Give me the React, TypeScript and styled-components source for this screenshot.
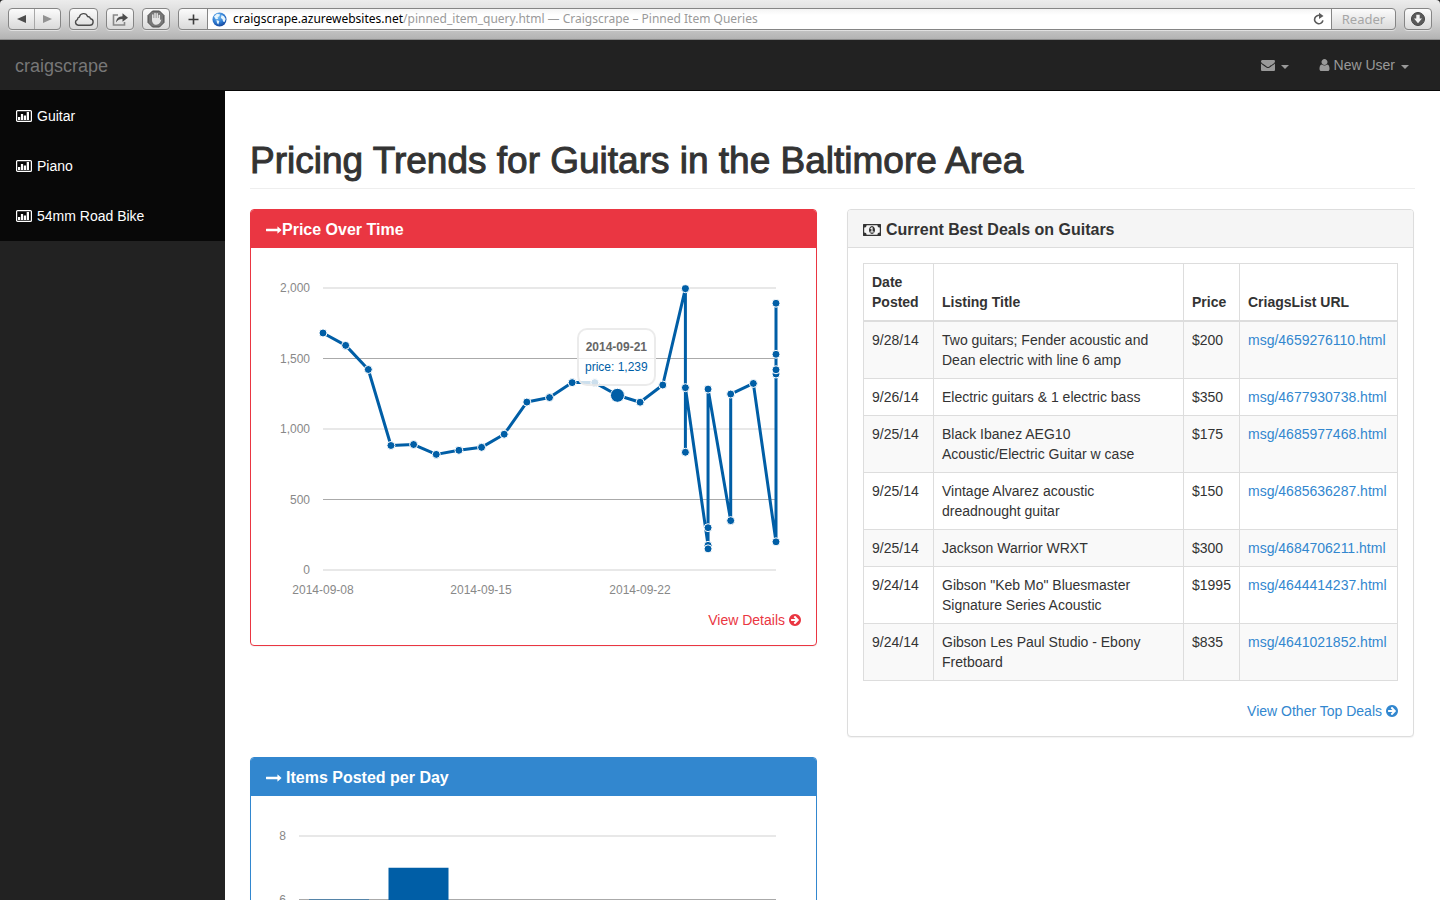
import React from "react";
import styled, { createGlobalStyle } from "styled-components";

const GlobalStyle = createGlobalStyle`
  *, *::before, *::after { box-sizing: border-box; }
  body {
    margin: 0;
    background: #222;
    color: #333;
    font-family: "Liberation Sans", Arial, sans-serif;
    font-size: 14px;
    line-height: 20px;
  }
  a { text-decoration: none; }
  button { font-family: inherit; margin: 0; padding: 0; cursor: pointer; }
`;

const BLUE = "#005ea6";

/* ---------- browser toolbar ---------- */

const Screen = styled.div`
  display: flex;
  flex-direction: column;
  height: 100vh;
  overflow: hidden;
`;

const Toolbar = styled.header`
  display: flex;
  flex: none;
  align-items: flex-start;
  gap: 8px;
  height: 40px;
  padding: 8px;
  background: linear-gradient(#ececec, #d4d4d4 50%, #b3b3b3);
  border-bottom: 1px solid #8c8c8c;
  border-radius: 4px 4px 0 0;
  font-family: "Noto Sans", "Open Sans", sans-serif;
`;

const ToolGroup = styled.div`
  display: flex;
  height: 22px;
  border: 1px solid #858585;
  border-radius: 4px;
  background: linear-gradient(#fbfbfb, #dadada);
  box-shadow: 0 1px 0 rgba(255, 255, 255, 0.5);
  overflow: hidden;
`;

const ToolButton = styled.button<{ $width: number; $divided?: boolean }>`
  display: flex;
  align-items: center;
  justify-content: center;
  width: ${(p) => p.$width}px;
  height: 20px;
  border: 0;
  border-right: ${(p) => (p.$divided ? "1px solid #a8a8a8" : "0")};
  background: transparent;
  color: #4c4c4c;
`;

const AddressGroup = styled(ToolGroup)`
  flex: 1;
`;

const Address = styled.div`
  display: flex;
  flex: 1;
  align-items: center;
  min-width: 0;
  padding: 0 6px 0 4px;
  border-left: 1px solid #858585;
  border-right: 1px solid #858585;
  background: linear-gradient(#f4f4f4, #fff 30%);
  font-size: 12px;
  line-height: 20px;
  color: #9a9a9a;
  white-space: nowrap;
`;

const AddressText = styled.span`
  flex: 1;
  padding-left: 6px;
  overflow: hidden;
`;

const Host = styled.span`
  color: #000;
`;

const ReaderButton = styled(ToolButton)`
  font-size: 13px;
  color: #a6a6a6;
`;

/* ---------- site navigation ---------- */

const Navbar = styled.nav`
  display: flex;
  flex: none;
  align-items: center;
  justify-content: space-between;
  height: 51px;
  padding: 0 16px 0 15px;
  background: #222;
  border-bottom: 1px solid #080808;
`;

const Brand = styled.a`
  padding-top: 2px;
  font-size: 18px;
  color: #777;
`;

const UserMenu = styled.div`
  display: flex;
`;

const MenuButton = styled.button`
  display: flex;
  align-items: center;
  gap: 4px;
  height: 50px;
  padding: 0 15px;
  border: 0;
  background: transparent;
  color: #999;
  font-size: 14px;
`;

const Caret = styled.span`
  margin: 3px 0 0 2px;
  border-top: 4px solid currentColor;
  border-left: 4px solid transparent;
  border-right: 4px solid transparent;
`;

const Body = styled.div`
  display: flex;
  flex: 1;
  min-height: 0;
`;

const Sidebar = styled.aside`
  flex: none;
  width: 225px;
  background: #222;
`;

const SideList = styled.ul`
  margin: 0;
  padding: 0;
  list-style: none;
  background: #080808;
`;

const SideLink = styled.a`
  display: flex;
  align-items: center;
  gap: 5px;
  height: 50px;
  padding: 0 16px;
  color: #fff;
`;

/* ---------- page content ---------- */

const Main = styled.main`
  flex: 1;
  min-width: 0;
  padding: 48px 25px 0;
  background: #fff;
  overflow: hidden;
`;

const PageTitle = styled.h1`
  margin: 0 0 20px;
  padding: 1px 0 7px;
  border-bottom: 1px solid #eee;
  font-size: 37px;
  font-weight: 400;
  line-height: 41px;
  -webkit-text-stroke: 1px #333;
`;

const Row = styled.div`
  display: grid;
  grid-template-columns: 1fr 1fr;
  align-items: start;
  column-gap: 30px;
  margin-bottom: 20px;
  padding-right: 1px;
`;

const Panel = styled.section<{ $edge: string }>`
  min-width: 0;
  border: 1px solid ${(p) => p.$edge};
  border-radius: 4px;
  background: #fff;
  box-shadow: 0 1px 1px rgba(0, 0, 0, 0.05);
`;

const PanelHead = styled.div<{ $fill: string; $edge: string; $color: string }>`
  padding: 11px 15px 8px;
  border-bottom: 1px solid ${(p) => p.$edge};
  border-radius: 3px 3px 0 0;
  background: ${(p) => p.$fill};
  color: ${(p) => p.$color};
`;

const PanelTitle = styled.h3<{ $gap: number }>`
  display: flex;
  align-items: center;
  gap: ${(p) => p.$gap}px;
  margin: 0;
  font-size: 16px;
  font-weight: 700;
  line-height: 18px;
`;

const PanelBody = styled.div`
  padding: 15px;
`;

const MoreLink = styled.a<{ $color: string }>`
  display: flex;
  align-items: center;
  justify-content: flex-end;
  gap: 4px;
  color: ${(p) => p.$color};
`;

const ChartBox = styled.div`
  position: relative;
  margin-bottom: 5px;
`;

const ChartSvg = styled.svg`
  display: block;
  width: 100%;
  height: 342px;
  font-size: 12px;
`;

const Tooltip = styled.div`
  position: absolute;
  left: 311px;
  top: 65px;
  padding: 7px 6px;
  border: 2px solid rgba(230, 230, 230, 0.8);
  border-radius: 10px;
  background: rgba(255, 255, 255, 0.8);
  font-size: 12px;
  line-height: 20px;
  text-align: center;
  white-space: nowrap;
`;

const TooltipDate = styled.div`
  font-weight: 700;
  color: #666;
`;

const TooltipValue = styled.div`
  color: ${BLUE};
`;

const Table = styled.table`
  width: 100%;
  margin-bottom: 20px;
  border: 1px solid #ddd;
  border-collapse: collapse;
  table-layout: fixed;
`;

const Col = styled.col<{ $width?: number }>`
  width: ${(p) => (p.$width ? `${p.$width}px` : "auto")};
`;

const HeadCell = styled.th`
  padding: 8px;
  border: 1px solid #ddd;
  border-bottom-width: 2px;
  text-align: left;
  vertical-align: bottom;
`;

const BodyRow = styled.tr`
  &:nth-child(odd) { background: #f9f9f9; }
`;

const Cell = styled.td`
  padding: 8px;
  border: 1px solid #ddd;
  vertical-align: top;
`;

const ItemLink = styled.a`
  color: #3287cf;
`;

/* ---------- icons ---------- */

const GlyphSvg = styled.svg`
  display: block;
  flex: none;
  fill: currentColor;
`;

const Glyph = ({ d, size, box = "0 0 1792 1792", width }: { d: string; size: number; box?: string; width?: number }) => (
  <GlyphSvg width={width ?? size} height={size} viewBox={box} aria-hidden="true">
    <path fillRule="evenodd" d={d} />
  </GlyphSvg>
);

const ENVELOPE =
  "M1792 710v794q0 66-47 113t-113 47h-1472q-66 0-113-47t-47-113v-794q44 49 101 87 362 246 497 345 57 42 92.5 65.5t94.5 48 110 24.5h2q51 0 110-24.5t94.5-48 92.5-65.5q170-123 498-345 57-39 100-87zm0-294q0 79-49 151t-122 123q-376 261-468 325-10 7-42.5 31t-54 38.5-52 32.5-57.5 27-50 9h-2q-23 0-50-9t-57.5-27-52-32.5-54-38.5-42.5-31q-91-64-262-182.5t-205-142.5q-62-42-117-115.5t-55-136.5q0-78 41.5-130t118.5-52h1472q65 0 112.5 47t47.5 113z";
const USER =
  "M1536 1399q0 109-62.5 187t-150.5 78h-854q-88 0-150.5-78t-62.5-187q0-85 8.5-160.5t31.5-152 58.5-131 94-89 134.5-34.5q131 128 313 128t313-128q76 0 134.5 34.5t94 89 58.5 131 31.5 152 8.5 160.5zm-256-887q0 159-112.5 271.5t-271.5 112.5-271.5-112.5-112.5-271.5 112.5-271.5 271.5-112.5 271.5 112.5 112.5 271.5z";
const LONG_ARROW =
  "M1728 893q0 14-10 24l-384 354q-16 14-35 6-19-9-19-29v-224h-1248q-14 0-23-9t-9-23v-192q0-14 9-23t23-9h1248v-224q0-21 19-29t35 5l384 350q10 10 10 23z";
const CIRCLE_ARROW =
  "M1413 896q0-27-18-45l-91-91-362-362q-18-18-45-18t-45 18l-91 91q-18 18-18 45t18 45l189 189h-502q-26 0-45 19t-19 45v128q0 26 19 45t45 19h502l-189 189q-19 19-19 45t19 45l91 91q18 18 45 18t45-18l362-362 91-91q18-18 18-45zm251 0q0 209-103 385.5t-279.5 279.5-385.5 103-385.5-103-279.5-279.5-103-385.5 103-385.5 279.5-279.5 385.5-103 385.5 103 279.5 279.5 103 385.5z";
const MONEY =
  "M768 1152h384v-96h-128v-448h-114l-148 137 77 80q42-37 55-57h2v288h-128v96zm512-256q0 70-21 142t-59.5 134-101.5 101-138 39-138-39-101.5-101-59.5-134-21-142 21-142 59.5-134 101.5-101 138-39 138 39 101.5 101 59.5 134 21 142zm512 256v-512q-106 0-181-75t-75-181h-1152q0 106-75 181t-181 75v512q106 0 181 75t75 181h1152q0-106 75-181t181-75zm128-832v1152q0 26-19 45t-45 19h-1792q-26 0-45-19t-19-45v-1152q0-26 19-45t45-19h1792q26 0 45 19t19 45z";

const BarChartIcon = () => (
  <GlyphSvg width="16" height="12" viewBox="0 0 16 12" aria-hidden="true">
    <rect x="0.6" y="0.6" width="14.800" height="10.800" rx="1" fill="none" stroke="currentColor" strokeWidth="1.200" />
    <rect x="2" y="7" width="2.200" height="3" />
    <rect x="4.900" y="4" width="2.200" height="6" />
    <rect x="7.800" y="5.500" width="2.200" height="4.500" />
    <rect x="10.700" y="2" width="2.300" height="8" />
  </GlyphSvg>
);

const CloudIcon = () => (
  <svg width="20" height="15" viewBox="0 0 20 15" fill="none" stroke="#4c4c4c" strokeWidth="1.4" aria-hidden="true">
    <path d="M4.200 13.200H15.800A3.300 3.300 0 0 0 16.600 6.700 3 3 0 0 0 13.600 4.500 4.300 4.300 0 0 0 5.300 5.200 2.600 2.600 0 0 0 3.400 7.600 2.900 2.900 0 0 0 4.200 13.200Z" />
  </svg>
);

const ShareIcon = () => (
  <svg width="18" height="15" viewBox="0 0 18 15" aria-hidden="true">
    <path d="M7 3H2.500V13H13.500V10" fill="none" stroke="#888" strokeWidth="1.600" />
    <path d="M5 10.500C5.300 6.500 7.500 4.300 11.500 4.200V1.200L17 5.700 11.500 9.800V7C8.500 7 6.500 8 5 10.500Z" fill="#4c4c4c" />
  </svg>
);

const HandIcon = () => (
  <svg width="18" height="18" viewBox="0 0 18 18" aria-hidden="true">
    <path d="M5.500 1H12.500L17 5.500V12.500L12.500 17H5.500L1 12.500V5.500Z" fill="#777" stroke="#4c4c4c" />
    <path d="M5.800 9V5M8 8V3.600M10.200 8V3.800M12.300 9V5.400" stroke="#e4e4e4" strokeWidth="1.500" strokeLinecap="round" />
    <path d="M5 8H13V10L14.300 9.300C14 12 12 14.800 9.300 14.800 6.500 14.800 5 12.500 5 10Z" fill="#e4e4e4" />
  </svg>
);

const GlobeIcon = () => (
  <svg width="15" height="15" viewBox="0 0 15 15" aria-hidden="true">
    <defs>
      <radialGradient id="globe" cx="0.4" cy="0.3" r="0.75">
        <stop offset="0" stopColor="#7cc3f7" />
        <stop offset="0.6" stopColor="#2c78d0" />
        <stop offset="1" stopColor="#123f94" />
      </radialGradient>
    </defs>
    <circle cx="7.500" cy="7.500" r="7" fill="url(#globe)" />
    <path d="M2 4.500 5 1.800 8.200 2.500 7.200 4.300 5.600 5.200 6 7 3.800 7.300ZM4.500 8 7.300 9 6.300 12.500 5 11ZM9.500 3 12 4.200 13.700 7 12.600 10 11 9.600 10.500 7.200 8.900 6Z" fill="#e6f5fd" />
  </svg>
);

const ReloadIcon = () => (
  <svg width="12" height="14" viewBox="0 0 12 14" aria-hidden="true">
    <path d="M7.500 3.700A4.200 4.200 0 1 0 9.900 8.300" fill="none" stroke="#5a5a5a" strokeWidth="1.600" />
    <path d="M6 0.800 10.500 3.900 6 7Z" fill="#5a5a5a" />
  </svg>
);

const DownloadIcon = () => (
  <svg width="14" height="14" viewBox="0 0 14 14" aria-hidden="true">
    <circle cx="7" cy="7" r="6.500" fill="#5a5a5a" stroke="#444" />
    <path d="M5.300 2.800H8.700V6.600H11L7 11.200 3 6.600H5.300Z" fill="#f4f4f4" />
  </svg>
);

/* ---------- charts ---------- */

const DAY = 22.65;
const points: [number, number][] = [
  [0, 1681], [1, 1593], [2, 1422], [3, 883], [4, 890], [5, 820], [6, 849], [7, 870], [8, 963],
  [9, 1191], [10, 1223], [11, 1329], [12, 1329], [13, 1239], [14, 1190], [15, 1312],
  [16, 1995], [16, 835], [16, 1293], [17, 175], [17, 150], [17, 300], [17, 1283],
  [18, 350], [18, 1248], [19, 1323], [20, 200], [20, 1390], [20, 1420], [20, 1530], [20, 1892],
];
const px = (day: number) => 57 + day * DAY;
const py = (value: number) => 307 - value * 0.141;

const GridLine = ({ x, y, heavy }: { x: number; y: number; heavy: boolean }) => (
  <line x1={x} x2="510" y1={y} y2={y} stroke={heavy ? "#e8e8e8" : "#aaa"} strokeWidth={heavy ? 2 : 1} />
);

const PriceChart = () => (
  <ChartBox>
    <ChartSvg viewBox="0 0 535 342" preserveAspectRatio="xMinYMin meet" role="img" aria-label="Price over time">
      {[
        ["2,000", 25], ["1,500", 95.5], ["1,000", 166], ["500", 236.5], ["0", 307],
      ].map(([label, y]) => (
        <g key={label}>
          <text x="44" y={Math.round(y as number) + 4} textAnchor="end" fill="#888">{label}</text>
          <GridLine x={57} y={y as number} heavy={Number.isInteger(y)} />
        </g>
      ))}
      {[["2014-09-08", 57], ["2014-09-15", 215], ["2014-09-22", 374]].map(([label, x]) => (
        <text key={label} x={x} y="331" textAnchor="middle" fill="#888">{label}</text>
      ))}
      <polyline
        points={points.map(([d, v]) => `${px(d)},${py(v)}`).join(" ")}
        fill="none"
        stroke={BLUE}
        strokeWidth="3"
        strokeLinejoin="round"
      />
      {points.map(([d, v], i) => (
        <circle key={i} cx={px(d)} cy={py(v)} r={d === 13 ? 7 : 4} fill={BLUE} stroke="#fff" />
      ))}
    </ChartSvg>
    <Tooltip>
      <TooltipDate>2014-09-21</TooltipDate>
      <TooltipValue>price: 1,239</TooltipValue>
    </Tooltip>
  </ChartBox>
);

const perDay = [6, 7, 4, 3, 5, 2];

const ItemsChart = () => (
  <ChartBox>
    <ChartSvg viewBox="0 0 535 342" preserveAspectRatio="xMinYMin meet" role="img" aria-label="Items posted per day">
      {[8, 6, 4, 2, 0].map((n, i) => {
        const y = 25 + i * 63.5;
        return (
          <g key={n}>
            <text x="20" y={Math.round(y) + 4} textAnchor="end" fill="#888">{n}</text>
            <GridLine x={33} y={y} heavy={i % 2 === 0} />
          </g>
        );
      })}
      {perDay.map((n, i) => (
        <rect key={i} x={43 + i * 79.5} y={279 - n * 31.75} width="60" height={n * 31.75} fill={BLUE} />
      ))}
    </ChartSvg>
  </ChartBox>
);

/* ---------- page ---------- */

const deals = [
  ["9/28/14", "Two guitars; Fender acoustic and Dean electric with line 6 amp", "$200", "msg/4659276110.html"],
  ["9/26/14", "Electric guitars & 1 electric bass", "$350", "msg/4677930738.html"],
  ["9/25/14", "Black Ibanez AEG10 Acoustic/Electric Guitar w case", "$175", "msg/4685977468.html"],
  ["9/25/14", "Vintage Alvarez acoustic dreadnought guitar", "$150", "msg/4685636287.html"],
  ["9/25/14", "Jackson Warrior WRXT", "$300", "msg/4684706211.html"],
  ["9/24/14", 'Gibson "Keb Mo" Bluesmaster Signature Series Acoustic', "$1995", "msg/4644414237.html"],
  ["9/24/14", "Gibson Les Paul Studio - Ebony Fretboard", "$835", "msg/4641021852.html"],
];

const BrowserToolbar = () => (
  <Toolbar>
    <ToolGroup>
      <ToolButton $width={26} $divided aria-label="Back">
        <svg width="9" height="8" viewBox="0 0 9 8"><path d="M9 0V8L0 4Z" fill="#4c4c4c" /></svg>
      </ToolButton>
      <ToolButton $width={25} aria-label="Forward">
        <svg width="9" height="8" viewBox="0 0 9 8"><path d="M0 0V8L9 4Z" fill="#939393" /></svg>
      </ToolButton>
    </ToolGroup>
    <ToolGroup><ToolButton $width={27} aria-label="iCloud tabs"><CloudIcon /></ToolButton></ToolGroup>
    <ToolGroup><ToolButton $width={26} aria-label="Share"><ShareIcon /></ToolButton></ToolGroup>
    <ToolGroup><ToolButton $width={26} aria-label="Block ads"><HandIcon /></ToolButton></ToolGroup>
    <AddressGroup>
      <ToolButton $width={28} aria-label="Add bookmark">
        <svg width="11" height="11" viewBox="0 0 11 11"><path d="M5.500 0.500V10.500M0.500 5.500H10.500" stroke="#3c3c3c" strokeWidth="1.600" /></svg>
      </ToolButton>
      <Address>
        <GlobeIcon />
        <AddressText>
          <Host>craigscrape.azurewebsites.net</Host>/pinned_item_query.html — Craigscrape – Pinned Item Queries
        </AddressText>
        <ReloadIcon />
      </Address>
      <ReaderButton $width={63}>Reader</ReaderButton>
    </AddressGroup>
    <ToolGroup><ToolButton $width={26} aria-label="Downloads"><DownloadIcon /></ToolButton></ToolGroup>
  </Toolbar>
);

export default function App() {
  return (
    <Screen>
      <GlobalStyle />
      <BrowserToolbar />
      <Navbar>
        <Brand href="#">craigscrape</Brand>
        <UserMenu>
          <MenuButton aria-label="Messages">
            <Glyph d={ENVELOPE} size={14} />
            <Caret />
          </MenuButton>
          <MenuButton>
            <Glyph d={USER} size={14} width={11} box="192 0 1408 1792" />
            New User
            <Caret />
          </MenuButton>
        </UserMenu>
      </Navbar>
      <Body>
        <Sidebar>
          <SideList>
            {["Guitar", "Piano", "54mm Road Bike"].map((name) => (
              <li key={name}>
                <SideLink href="#"><BarChartIcon />{name}</SideLink>
              </li>
            ))}
          </SideList>
        </Sidebar>
        <Main>
          <PageTitle>Pricing Trends for Guitars in the Baltimore Area</PageTitle>
          <Row>
            <Panel $edge="#ea3642">
              <PanelHead $fill="#ea3642" $edge="#ea3642" $color="#fff">
                <PanelTitle $gap={0}><Glyph d={LONG_ARROW} size={16} />Price Over Time</PanelTitle>
              </PanelHead>
              <PanelBody>
                <PriceChart />
                <MoreLink href="#" $color="#ea3642">View Details<Glyph d={CIRCLE_ARROW} size={12} box="128 128 1536 1536" /></MoreLink>
              </PanelBody>
            </Panel>
            <Panel $edge="#ddd">
              <PanelHead $fill="#f5f5f5" $edge="#ddd" $color="#333">
                <PanelTitle $gap={5}><Glyph d={MONEY} width={18} size={12} box="0 256 1920 1280" />Current Best Deals on Guitars</PanelTitle>
              </PanelHead>
              <PanelBody>
                <Table>
                  <colgroup><Col $width={70} /><Col /><Col $width={56} /><Col $width={158} /></colgroup>
                  <thead>
                    <tr>
                      <HeadCell>Date Posted</HeadCell>
                      <HeadCell>Listing Title</HeadCell>
                      <HeadCell>Price</HeadCell>
                      <HeadCell>CriagsList URL</HeadCell>
                    </tr>
                  </thead>
                  <tbody>
                    {deals.map(([date, title, price, url]) => (
                      <BodyRow key={url}>
                        <Cell>{date}</Cell>
                        <Cell>{title}</Cell>
                        <Cell>{price}</Cell>
                        <Cell><ItemLink href="#">{url}</ItemLink></Cell>
                      </BodyRow>
                    ))}
                  </tbody>
                </Table>
                <MoreLink href="#" $color="#3287cf">View Other Top Deals<Glyph d={CIRCLE_ARROW} size={12} box="128 128 1536 1536" /></MoreLink>
              </PanelBody>
            </Panel>
          </Row>
          <Row>
            <Panel $edge="#3287cf">
              <PanelHead $fill="#3287cf" $edge="#3287cf" $color="#fff">
                <PanelTitle $gap={4}><Glyph d={LONG_ARROW} size={16} />Items Posted per Day</PanelTitle>
              </PanelHead>
              <PanelBody>
                <ItemsChart />
                <MoreLink href="#" $color="#3287cf">View Details<Glyph d={CIRCLE_ARROW} size={12} box="128 128 1536 1536" /></MoreLink>
              </PanelBody>
            </Panel>
          </Row>
        </Main>
      </Body>
    </Screen>
  );
}
